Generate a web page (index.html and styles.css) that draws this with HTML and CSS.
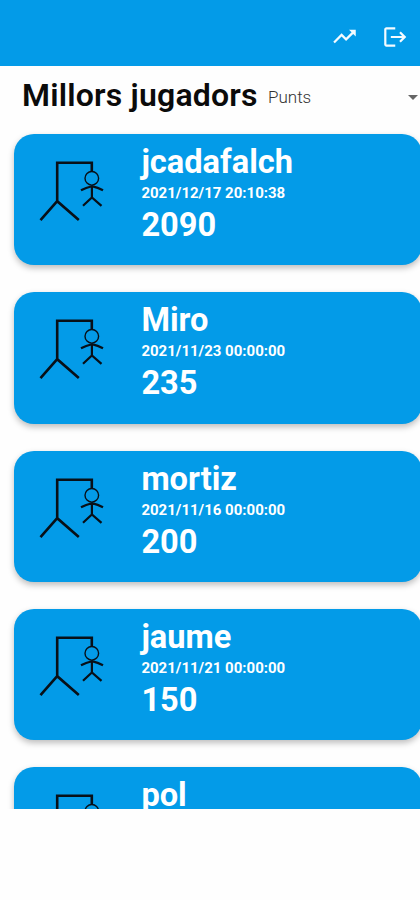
FILE: index.html
```html
<!DOCTYPE html>
<html lang="ca">
  <head>
    <meta charset="UTF-8" />
    <meta name="viewport" content="width=device-width, initial-scale=1.0" />
    <title>Millors jugadors</title>
    <link rel="stylesheet" href="styles.css">
  </head>
  <body>
    <svg class="symbols" width="0" height="0">
      <symbol id="hangman" viewBox="0 0 72 66">
        <path class="gallows" d="M5.5 62.2L22.2 43.2L43.8 62M22.2 43.5V4.7H56.8V13.5" />
        <circle class="head" cx="56.8" cy="20.3" r="6.8" />
        <path class="limbs" d="M56.9 27.2V39.6M46 32.3Q51 29.5 56.8 28.2Q63 29.5 68 32.3M48 47.8L56.9 39.4L66.5 47.8" />
      </symbol>
    </svg>

    <div class="screen">
      <div class="navbar">
        <svg class="icon-trend" viewBox="0 0 24 24">
          <path d="M16 6l2.29 2.29-4.88 4.88-4-4L2 16.59 3.41 18l6-6 4 4 6.3-6.29L22 12V6z" />
        </svg>
        <svg class="icon-logout" viewBox="0 0 24 24" preserveAspectRatio="none">
          <path d="M17 7l-1.41 1.41L18.17 11H8v2h10.17l-2.58 2.58L17 17l5-5zM4 5h8V3H4c-1.1 0-2 .9-2 2v14c0 1.1.9 2 2 2h8v-2H4V5z" />
        </svg>
      </div>

      <div class="heading">
        <h1>Millors jugadors</h1>
        <div class="order">
          <span>Punts</span>
          <span class="caret"></span>
        </div>
      </div>

      <div class="players">
        <div class="card">
          <svg class="avatar"><use href="#hangman" /></svg>
          <div class="info">
            <h2>jcadafalch</h2>
            <p class="date">2021/12/17 20:10:38</p>
            <p class="points">2090</p>
          </div>
        </div>
        <div class="card">
          <svg class="avatar"><use href="#hangman" /></svg>
          <div class="info">
            <h2>Miro</h2>
            <p class="date">2021/11/23 00:00:00</p>
            <p class="points">235</p>
          </div>
        </div>
        <div class="card">
          <svg class="avatar"><use href="#hangman" /></svg>
          <div class="info">
            <h2>mortiz</h2>
            <p class="date">2021/11/16 00:00:00</p>
            <p class="points">200</p>
          </div>
        </div>
        <div class="card">
          <svg class="avatar"><use href="#hangman" /></svg>
          <div class="info">
            <h2>jaume</h2>
            <p class="date">2021/11/21 00:00:00</p>
            <p class="points">150</p>
          </div>
        </div>
        <div class="card">
          <svg class="avatar"><use href="#hangman" /></svg>
          <div class="info">
            <h2>pol</h2>
          </div>
        </div>
      </div>
    </div>
  </body>
</html>
```

FILE: styles.css
```css
* {
  margin: 0;
  padding: 0;
  box-sizing: border-box;
}

body {
  font-family: Roboto, sans-serif;
  background-color: #fefefe;
}

.symbols {
  display: block;
}

.screen {
  display: flex;
  flex-direction: column;
  height: 808.5px;
  overflow: hidden;
}

.navbar {
  flex: none;
  display: flex;
  justify-content: flex-end;
  align-items: center;
  gap: 24px;
  height: 66.4px;
  padding: 7px 12px 0 0;
  background-color: #039be8;
}

.navbar svg {
  fill: #f4fbff;
}

.icon-trend {
  width: 27px;
  height: 27px;
}

.icon-logout {
  width: 26.5px;
  height: 26px;
}

.heading {
  flex: none;
  display: flex;
  align-items: center;
  height: 59.6px;
  padding: 0 2px 0 22px;
}

.heading h1 {
  width: 246px;
  padding-bottom: 2px;
  font-size: 32px;
  font-weight: 600;
  letter-spacing: 0.2px;
  line-height: 56px;
  color: #0b0b0b;
  white-space: nowrap;
}

.order {
  flex: 1;
  display: flex;
  justify-content: space-between;
  align-items: center;
  padding-top: 2px;
  font-size: 17px;
  font-weight: 300;
  color: #333;
}

.caret {
  border: 5px solid transparent;
  border-top-color: #666;
  border-bottom: none;
}

.players {
  flex: 1;
  min-height: 0;
  display: flex;
  flex-direction: column;
  gap: 26.8px;
  padding: 8px 0 0 13.5px;
  overflow: hidden;
}

.card {
  flex: none;
  display: flex;
  width: 408px;
  height: 131.5px;
  padding: 9px 0 0 21.5px;
  border-radius: 20px;
  background-color: #039be8;
  box-shadow: 0 3px 6px rgba(0, 0, 0, 0.26);
  color: white;
}

.avatar {
  width: 72px;
  height: 66px;
  margin: 15px 34.4px 0 0;
  fill: none;
  stroke: #081018;
}

.gallows {
  stroke-width: 2.6;
}

.head {
  stroke-width: 1.4;
}

.limbs {
  stroke-width: 2.2;
}

.info h2 {
  font-size: 32.6px;
  font-weight: 700;
  line-height: 39px;
}

.date {
  font-size: 15px;
  font-weight: 700;
  line-height: 22px;
}

.points {
  font-size: 32.6px;
  font-weight: 700;
  line-height: 43px;
}
```
